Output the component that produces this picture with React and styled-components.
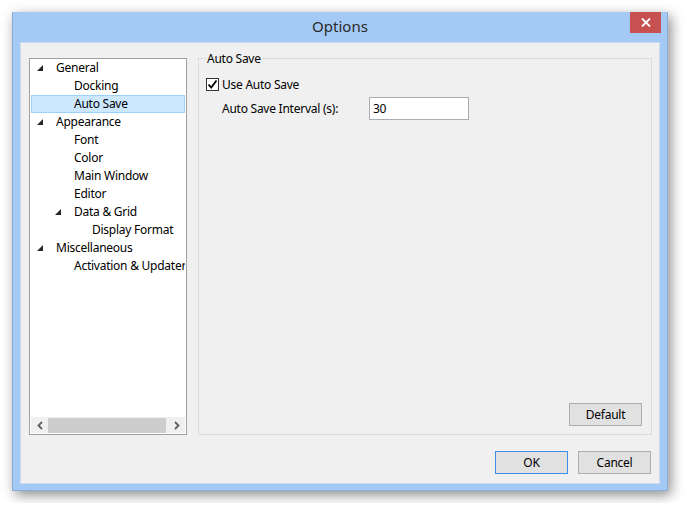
import React from "react";
import styled, { createGlobalStyle } from "styled-components";

const GlobalStyle = createGlobalStyle`
  html, body {
    margin: 0;
    padding: 0;
    background: #ffffff;
  }
  body {
    font-family: "Noto Sans", "Open Sans", sans-serif;
    font-size: 12px;
    letter-spacing: -0.25px;
    color: #000000;
  }
`;

const treeItems = [
  { label: "General", level: 0, expanded: true },
  { label: "Docking", level: 1 },
  { label: "Auto Save", level: 1, selected: true },
  { label: "Appearance", level: 0, expanded: true },
  { label: "Font", level: 1 },
  { label: "Color", level: 1 },
  { label: "Main Window", level: 1 },
  { label: "Editor", level: 1 },
  { label: "Data & Grid", level: 1, expanded: true },
  { label: "Display Format", level: 2 },
  { label: "Miscellaneous", level: 0, expanded: true },
  { label: "Activation & Updater", level: 1 },
];

const Expander = () => (
  <svg width="6" height="6" viewBox="0 0 6 6">
    <polygon points="6,0 6,6 0,6" fill="#262626" />
  </svg>
);

const Chevron = ({ dir }) => (
  <svg width="6" height="9" viewBox="0 0 6 9">
    <path
      d={dir === "left" ? "M5 1 L1.5 4.5 L5 8" : "M1 1 L4.5 4.5 L1 8"}
      fill="none"
      stroke="#606060"
      strokeWidth="1.8"
    />
  </svg>
);

const CheckMark = () => (
  <svg width="11" height="11" viewBox="0 0 11 11">
    <path d="M1.5 5.5 L4.2 8.5 L9.5 1.5" fill="none" stroke="#000" strokeWidth="1.8" />
  </svg>
);

const App = () => {
  return (
    <Page>
      <GlobalStyle />
      <Window>
        <TitleBar>
          <Title>Options</Title>
          <CloseButton>
            <svg width="10" height="9" viewBox="0 0 10 9">
              <path d="M1 0.5 L9 8.5 M9 0.5 L1 8.5" stroke="#fff" strokeWidth="1.8" />
            </svg>
          </CloseButton>
        </TitleBar>
        <Client>
          <MainRow>
            <Tree>
              <TreeList>
                {treeItems.map((item, index) => (
                  <TreeRow key={index} selected={item.selected}>
                    <Toggle level={item.level}>{item.expanded && <Expander />}</Toggle>
                    <span>{item.label}</span>
                  </TreeRow>
                ))}
              </TreeList>
              <ScrollBar>
                <ScrollArrow>
                  <Chevron dir="left" />
                </ScrollArrow>
                <Track>
                  <Thumb />
                </Track>
                <ScrollArrow>
                  <Chevron dir="right" />
                </ScrollArrow>
              </ScrollBar>
            </Tree>
            <Group>
              <Caption>Auto Save</Caption>
              <CheckRow>
                <CheckBox>
                  <CheckMark />
                </CheckBox>
                <span>Use Auto Save</span>
              </CheckRow>
              <FieldRow>
                <FieldLabel>Auto Save Interval (s):</FieldLabel>
                <TextBox>30</TextBox>
              </FieldRow>
              <GroupFooter>
                <Button>Default</Button>
              </GroupFooter>
            </Group>
          </MainRow>
          <Footer>
            <Button primary>OK</Button>
            <Button>Cancel</Button>
          </Footer>
        </Client>
      </Window>
    </Page>
  );
};

const Page = styled.div`
  padding: 12px;
`;

const Window = styled.div`
  width: 656px;
  height: 479px;
  box-sizing: border-box;
  display: flex;
  flex-direction: column;
  background: #a4c9f4;
  border: 1px solid #86aedc;
  border-top: none;
  padding: 0 7px 7px;
  box-shadow: 3px 4px 12px rgba(0, 0, 0, 0.45);
`;

const TitleBar = styled.div`
  position: relative;
  height: 30px;
  display: flex;
  align-items: center;
  justify-content: center;
  flex-shrink: 0;
`;

const Title = styled.div`
  font-size: 15px;
  letter-spacing: 0;
  color: #2a2a2a;
  margin-top: -2px;
`;

const CloseButton = styled.div`
  position: absolute;
  top: 0;
  right: -1px;
  width: 31px;
  height: 21px;
  background: #c75050;
  display: flex;
  align-items: center;
  justify-content: center;
`;

const Client = styled.div`
  flex: 1;
  display: flex;
  flex-direction: column;
  background: #f0f0f0;
  padding: 15px 7px 9px 8px;
  border: 1px solid #cfdcec;
  box-sizing: border-box;
`;

const MainRow = styled.div`
  display: flex;
  gap: 11px;
  height: 377px;
`;

const Tree = styled.div`
  width: 158px;
  box-sizing: border-box;
  display: flex;
  flex-direction: column;
  background: #ffffff;
  border: 1px solid #a0a0a0;
  padding: 0 1px 1px;
`;

const TreeList = styled.div`
  flex: 1;
  overflow: hidden;
`;

const TreeRow = styled.div`
  height: 18px;
  line-height: 16px;
  box-sizing: border-box;
  display: flex;
  align-items: center;
  white-space: nowrap;
  border: 1px solid ${(props) => (props.selected ? "#99d1ff" : "transparent")};
  background: ${(props) => (props.selected ? "#cce8ff" : "transparent")};

  span {
    margin-top: -1px;
  }
`;

const Toggle = styled.span`
  display: flex;
  align-items: center;
  width: 19px;
  padding-left: ${(props) => 5 + props.level * 18}px;
  flex-shrink: 0;
`;

const ScrollBar = styled.div`
  height: 16px;
  display: flex;
  align-items: center;
  background: #f0f0f0;
`;

const ScrollArrow = styled.div`
  width: 17px;
  height: 16px;
  display: flex;
  align-items: center;
  justify-content: center;
`;

const Track = styled.div`
  flex: 1;
  height: 16px;
  display: flex;
  align-items: center;
`;

const Thumb = styled.div`
  width: 118px;
  height: 15px;
  background: #cdcdcd;
`;

const Group = styled.div`
  flex: 1;
  display: flex;
  flex-direction: column;
  border: 1px solid #dcdcdc;
  padding: 0 9px 8px 7px;
`;

const Caption = styled.div`
  align-self: flex-start;
  margin-top: -8px;
  padding: 0 1px;
  background: #f0f0f0;
  line-height: 16px;
`;

const CheckRow = styled.div`
  display: flex;
  align-items: center;
  gap: 3px;
  margin-top: 9px;
  height: 16px;
`;

const CheckBox = styled.div`
  width: 13px;
  height: 13px;
  box-sizing: border-box;
  border: 1px solid #333333;
  background: #ffffff;
  display: flex;
  align-items: center;
  justify-content: center;
`;

const FieldRow = styled.div`
  display: flex;
  align-items: center;
  margin-top: 5px;
  padding-left: 16px;
`;

const FieldLabel = styled.div`
  width: 147px;
`;

const TextBox = styled.div`
  width: 100px;
  height: 23px;
  box-sizing: border-box;
  border: 1px solid #abadb3;
  background: #ffffff;
  padding: 0 3px;
  display: flex;
  align-items: center;
`;

const GroupFooter = styled.div`
  margin-top: auto;
  display: flex;
  justify-content: flex-end;
`;

const Footer = styled.div`
  display: flex;
  justify-content: flex-end;
  gap: 10px;
  margin-top: 16px;
  padding-right: 1px;
`;

const Button = styled.div`
  width: 73px;
  height: 23px;
  box-sizing: border-box;
  border: 1px solid ${(props) => (props.primary ? "#3c8ee6" : "#adadad")};
  background: #e1e1e1;
  display: flex;
  align-items: center;
  justify-content: center;
`;

export default App;
